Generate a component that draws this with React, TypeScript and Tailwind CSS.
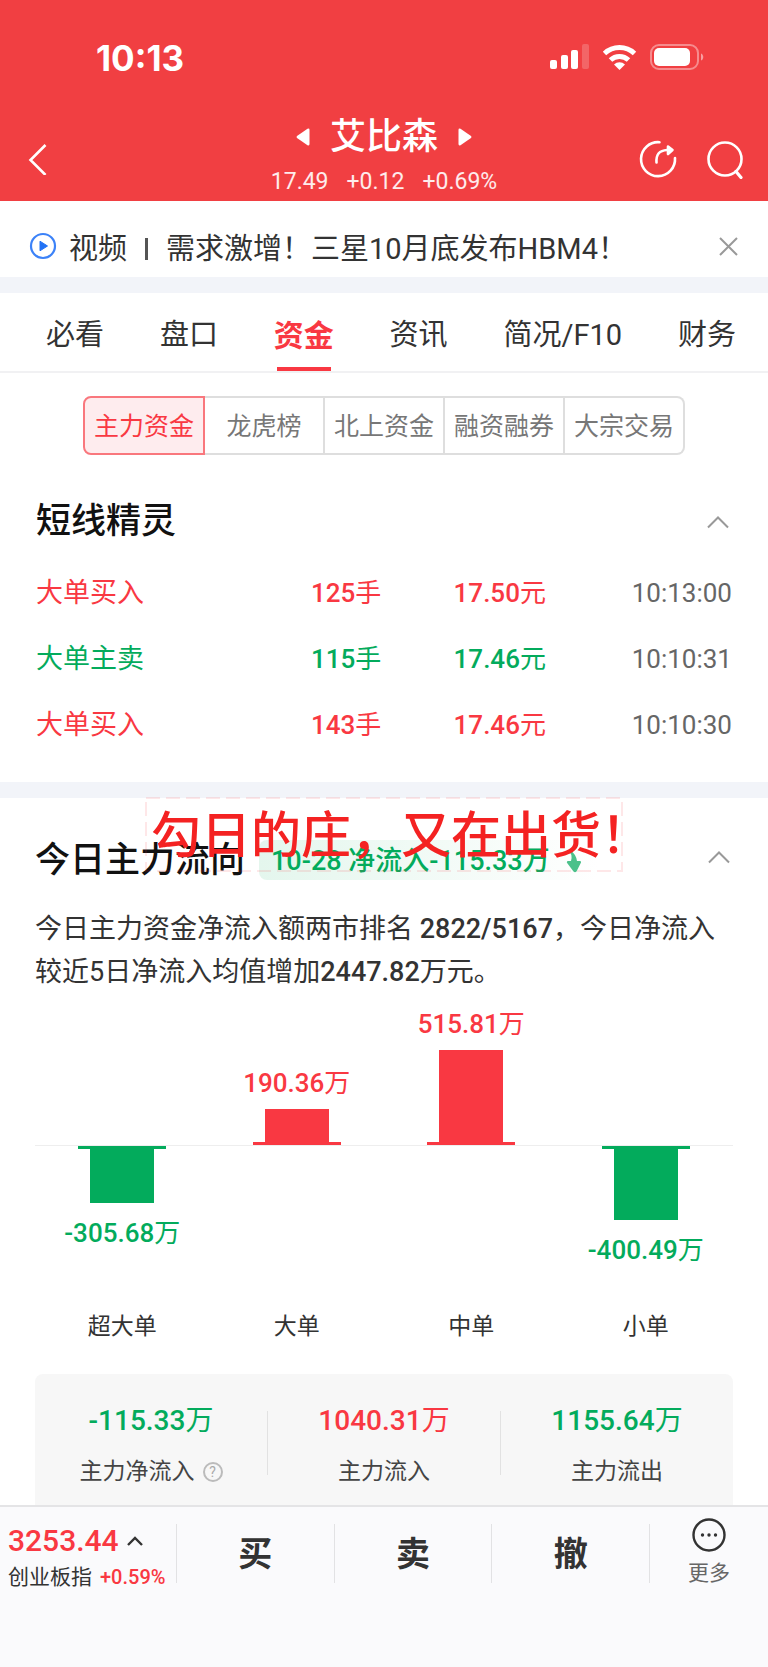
import { Fragment } from "react";

const RED = "text-[#f93842]";
const GREEN = "text-[#03ab5c]";

const tabs = ["必看", "盘口", "资金", "资讯", "简况/F10", "财务"];

const subTabs = ["主力资金", "龙虎榜", "北上资金", "融资融券", "大宗交易"];

const orders = [
  { label: "大单买入", volume: "125", price: "17.50", time: "10:13:00", buy: true },
  { label: "大单主卖", volume: "115", price: "17.46", time: "10:10:31", buy: false },
  { label: "大单买入", volume: "143", price: "17.46", time: "10:10:30", buy: true },
];

const flows = [
  { name: "超大单", value: -305.68 },
  { name: "大单", value: 190.36 },
  { name: "中单", value: 515.81 },
  { name: "小单", value: -400.49 },
];

const totals = [
  { label: "主力净流入", value: "-115.33", color: GREEN, help: true },
  { label: "主力流入", value: "1040.31", color: RED, help: false },
  { label: "主力流出", value: "1155.64", color: GREEN, help: false },
];

const barHeight = (value: number) => Math.round(Math.abs(value) * 0.183);

interface AmountProps {
  value: string | number;
  unit: string;
}

const Amount: React.FC<AmountProps> = ({ value, unit }) => (
  <span className="font-medium">
    {value}
    <span className="font-normal">{unit}</span>
  </span>
);

const StatusBar = () => (
  <div className="flex h-[116px] items-center justify-between pr-16 pl-24">
    <span className="font-['Inter'] text-[35px] leading-10 font-bold">10:13</span>
    <svg width="154" height="28" viewBox="0 0 154 28" fill="#fff" aria-hidden="true">
      <rect x="0" y="16" width="7" height="9" rx="2" />
      <rect x="11" y="11" width="7" height="14" rx="2" />
      <rect x="21" y="6" width="7" height="19" rx="2" />
      <rect x="32" y="0" width="7" height="25" rx="2" opacity="0.2" />
      <g fill="none" stroke="#fff" strokeWidth="5">
        <path d="M54.5 9.5a22 22 0 0 1 30 0" />
        <path d="M60.5 16a13 13 0 0 1 18 0" />
      </g>
      <path d="M64 20.5a8 8 0 0 1 11 0L69.500 26z" />
      <rect x="101" y="1" width="47" height="24" rx="8" fill="none" stroke="#fff" strokeWidth="2" opacity="0.4" />
      <rect x="104" y="4" width="36" height="18" rx="5" />
      <path d="M151 9.500c3 1 3 6 0 7z" opacity="0.5" />
    </svg>
  </div>
);

const Header = () => (
  <header className="bg-[#f13f42] text-white">
    <StatusBar />
    <div className="grid grid-cols-[1fr_auto_1fr] items-center">
      <button aria-label="返回" className="ml-7 w-6">
        <svg width="20" height="32" viewBox="0 0 20 32" fill="none" stroke="#fff" strokeWidth="2.6">
          <path d="M17.500 2 2.500 17l15 15" />
        </svg>
      </button>
      <div className="text-center">
        <div className="flex items-center justify-center gap-5">
          <button aria-label="上一只">
            <svg width="14" height="18" viewBox="0 0 14 18" fill="#fff">
              <path d="M1 8 11.500.800Q13.500 0 13.500 2v14q0 2-2 1.200L1 10Q0 9 1 8z" />
            </svg>
          </button>
          <h1 className="text-[36px] leading-[42px] font-medium">艾比森</h1>
          <button aria-label="下一只">
            <svg width="14" height="18" viewBox="0 0 14 18" fill="#fff">
              <path d="M13 8 2.500.800Q.500 0 .500 2v14q0 2 2 1.200L13 10q1-1 0-2z" />
            </svg>
          </button>
        </div>
        <p className="mt-1 flex justify-center gap-[18px] text-[23px] leading-[39px] text-white/90">
          <span>17.49</span>
          <span>+0.12</span>
          <span>+0.69%</span>
        </p>
      </div>
      <div className="mr-6 flex justify-end gap-[26px]">
        <button aria-label="分享">
          <svg width="40" height="40" viewBox="0 0 40 40" fill="none" stroke="#fff" strokeWidth="2.6" strokeLinecap="round" strokeLinejoin="round">
            <path d="M21.500 3.200A17 17 0 1 0 37 19" />
            <path d="M18.500 23.500C18 15.500 21 11.500 29 11" />
            <path d="M30 7.500 34.500 11 30 15z" fill="#fff" />
          </svg>
        </button>
        <button aria-label="搜索">
          <svg width="40" height="40" viewBox="0 0 40 40" fill="none" stroke="#fff" strokeWidth="2.6" strokeLinecap="round">
            <circle cx="21" cy="20" r="16.500" />
            <path d="m32 32.500 5 6" strokeWidth="3.200" />
          </svg>
        </button>
      </div>
    </div>
  </header>
);

const NewsBar = () => (
  <div className="flex h-[76px] items-center bg-white pt-4 pr-7 pl-7">
    <svg className="mr-[11px] shrink-0" width="30" height="30" viewBox="0 0 30 30" fill="none" aria-hidden="true">
      <circle cx="15" cy="14" r="12" stroke="#3c82f8" strokeWidth="2.2" />
      <path d="M12 9.200v9.600L19.500 14z" fill="#2272f5" stroke="#2272f5" strokeLinejoin="round" />
    </svg>
    <a href="#news" className="flex grow items-center pt-1 text-[29px] leading-10 text-[#333]">
      <span>视频</span>
      <span className="mx-[18px] h-[22px] w-[3px] bg-[#555]" />
      <span>需求激增！三星10月底发布HBM4！</span>
    </a>
    <button aria-label="关闭" className="shrink-0">
      <svg width="22" height="22" viewBox="0 0 22 22" stroke="#999" strokeWidth="2">
        <path d="m2 2 17 17M19 2 2 19" />
      </svg>
    </button>
  </div>
);

const Tabs = () => (
  <nav className="flex h-20 items-stretch justify-between border-b-2 border-[#f1f1f3] pt-1 pr-8 pl-[46px]">
    {tabs.map((tab) =>
      tab === "资金" ? (
        <button key={tab} className={`relative pt-0.5 text-[30px] font-bold ${RED}`}>
          {tab}
          <span className="absolute inset-x-[3px] bottom-0 h-1 bg-[#f93842]" />
        </button>
      ) : (
        <button key={tab} className="pt-1 text-[29px] text-[#333]">
          {tab}
        </button>
      )
    )}
  </nav>
);

const SubTabs = () => (
  <div className="mx-[83px] mt-[23px] flex h-[59px]">
    {subTabs.map((tab, i) => (
      <button
        key={tab}
        className={
          i === 0
            ? `flex-1 rounded-l-lg border-2 border-[#f9777d] bg-[#feecee] pt-0.5 text-[25px] whitespace-nowrap ${RED}`
            : "flex-1 border-y-2 border-r-2 border-[#dedede] pt-0.5 text-[25px] whitespace-nowrap text-[#777] last:rounded-r-lg"
        }
      >
        {tab}
      </button>
    ))}
  </div>
);

const CollapseButton = () => (
  <button aria-label="收起">
    <svg width="24" height="16" viewBox="0 0 24 16" fill="none" stroke="#999" strokeWidth="2">
      <path d="m2 13.500 10-10 10 10" />
    </svg>
  </button>
);

const ShortTerm = () => (
  <section className="px-9 pt-[45px] pb-6">
    <div className="mb-4 flex items-center justify-between pr-0.5">
      <h2 className="text-[35px] leading-[44px] font-medium text-[#111]">短线精灵</h2>
      <CollapseButton />
    </div>
    <table className="w-full table-fixed text-left text-[26px]">
      <tbody>
        {orders.map((order) => (
          <tr key={order.time} className={`h-[66px] ${order.buy ? RED : GREEN}`}>
            <td className="w-[39.5%] text-[27px]">{order.label}</td>
            <td className="w-[20.5%]">
              <Amount value={order.volume} unit="手" />
            </td>
            <td className="w-[20%]">
              <Amount value={order.price} unit="元" />
            </td>
            <td className="text-right text-[#666]">{order.time}</td>
          </tr>
        ))}
      </tbody>
    </table>
  </section>
);

const Caption = () => (
  <div className="absolute -top-px left-1/2 h-[75px] w-[478px] -translate-x-1/2 pl-1.5">
    <svg className="absolute inset-0" width="478" height="75" fill="none" aria-hidden="true">
      <rect x="1" y="1" width="476" height="73" stroke="#f93842" strokeOpacity="0.12" strokeWidth="2" strokeDasharray="14 6" />
    </svg>
    <p className="relative text-[50px] leading-[78px] font-medium whitespace-nowrap text-[#f42222]">
      勾日的庄，又在出货！
    </p>
  </div>
);

const FlowChart = () => (
  <div className="grid grid-cols-4">
    {flows.map(({ name, value }) => (
      <div key={name} className="flex flex-col items-center text-[26px] leading-9">
        <div className={`flex h-[151px] flex-col items-center justify-end ${RED}`}>
          {value > 0 && (
            <>
              <div className="mb-2">
                <Amount value={value} unit="万" />
              </div>
              <div className="w-16 bg-[#f93842]" style={{ height: barHeight(value) - 2 }} />
              <div className="h-[3px] w-[88px] bg-[#f93842]" />
            </>
          )}
        </div>
        <div className={`flex h-[165px] w-full flex-col items-center border-t border-[#eee] ${GREEN}`}>
          {value < 0 && (
            <>
              <div className="h-[3px] w-[88px] bg-[#03ab5c]" />
              <div className="w-16 bg-[#03ab5c]" style={{ height: barHeight(value) - 2 }} />
              <div className="mt-3">
                <Amount value={value} unit="万" />
              </div>
            </>
          )}
        </div>
        <span className="text-[23px] leading-[34px] text-[#333]">{name}</span>
      </div>
    ))}
  </div>
);

const Totals = () => (
  <div className="mt-[30px] flex items-start rounded-t-lg bg-[#f7f7f7] pt-[29px] pb-4">
    {totals.map((item, i) => (
      <Fragment key={item.label}>
        {i > 0 && <div className="mt-2 h-16 w-px bg-[#e2e2e2]" />}
        <div className="flex flex-1 flex-col items-center gap-4">
          <div className={`text-[28px] leading-9 ${item.color}`}>
            <Amount value={item.value} unit="万" />
          </div>
          <span className="flex items-center gap-2 text-[23px] leading-[34px] text-[#444]">
            {item.label}
            {item.help && (
              <button
                aria-label="说明"
                className="flex size-5 items-center justify-center rounded-full border-2 border-[#bbb] text-[14px] leading-4 text-[#aaa]"
              >
                ?
              </button>
            )}
          </span>
        </div>
      </Fragment>
    ))}
  </div>
);

const MainFlow = () => (
  <section className="relative px-[35px] pt-[42px]">
    <div className="flex h-10 items-center pr-0.5">
      <h2 className="pt-0.5 text-[35px] leading-10 font-medium text-[#111]">今日主力流向</h2>
      <div className={`ml-3.5 flex h-10 items-center rounded-lg bg-linear-to-r from-[#e4f6ed] to-white px-3 pt-0.5 text-[27px] font-medium ${GREEN}`}>
        10-28 净流入-115.33万
        <svg className="ml-4" width="20" height="24" viewBox="0 0 20 24" aria-hidden="true">
          <path d="M2 1q5 4 3 11H1.500q-1.500 1 0 2.500l6 8q1.500 1.500 3 0l4.500-9q.500-1.500-1-1.500h-3Q10 5 4 1z" fill="#4cc18b" />
        </svg>
      </div>
      <div className="ml-auto">
        <CollapseButton />
      </div>
    </div>
    <Caption />
    <p className="mt-7 text-[27px] leading-[43px] text-[#333]">
      今日主力资金净流入额两市排名 <span className="font-medium">2822/5167</span>，今日净流入较近5日净流入均值增加
      <span className="font-medium">2447.82</span>万元。
    </p>
    <FlowChart />
    <Totals />
  </section>
);

const BottomBar = () => (
  <footer className="grow border-t-2 border-[#e4e4e6] bg-[#fafafc]">
    <div className="flex h-[92px] items-center">
      <div className="w-[176px] shrink-0 pt-2 pl-2">
        <button className={`flex items-center gap-2 text-[30px] leading-10 font-medium ${RED}`}>
          3253.44
          <svg width="16" height="10" viewBox="0 0 16 10" fill="none" stroke="#333" strokeWidth="2.4">
            <path d="m1 9 7-7 7 7" />
          </svg>
        </button>
        <p className="flex gap-2 text-[21px] leading-[32px] whitespace-nowrap text-[#333]">
          创业板指 <span className={`text-[20px] font-medium ${RED}`}>+0.59%</span>
        </p>
      </div>
      {["买", "卖", "撤"].map((action) => (
        <Fragment key={action}>
          <div className="h-[59px] w-px bg-[#e2e2e4]" />
          <button className="flex-1 pt-0.5 text-[34px] leading-[59px] font-bold text-[#333]">{action}</button>
        </Fragment>
      ))}
      <div className="h-[59px] w-px bg-[#e2e2e4]" />
      <button className="flex w-[118px] shrink-0 flex-col items-center gap-1 text-[21px] leading-8 text-[#666]">
        <svg width="36" height="36" viewBox="0 0 36 36" fill="#333" aria-hidden="true">
          <circle cx="18" cy="18" r="15.500" fill="none" stroke="#333" strokeWidth="2.400" />
          <circle cx="11.500" cy="18" r="1.700" />
          <circle cx="18" cy="18" r="1.700" />
          <circle cx="24.500" cy="18" r="1.700" />
        </svg>
        更多
      </button>
    </div>
  </footer>
);

export default function App() {
  return (
    <div lang="zh-CN" className="flex min-h-screen flex-col bg-white font-['Roboto','Noto_Sans_CJK_SC',sans-serif]">
      <Header />
      <NewsBar />
      <div className="h-4 bg-[#f2f4f9]" />
      <Tabs />
      <SubTabs />
      <ShortTerm />
      <div className="h-4 bg-[#f2f4f9]" />
      <MainFlow />
      <BottomBar />
    </div>
  );
}
